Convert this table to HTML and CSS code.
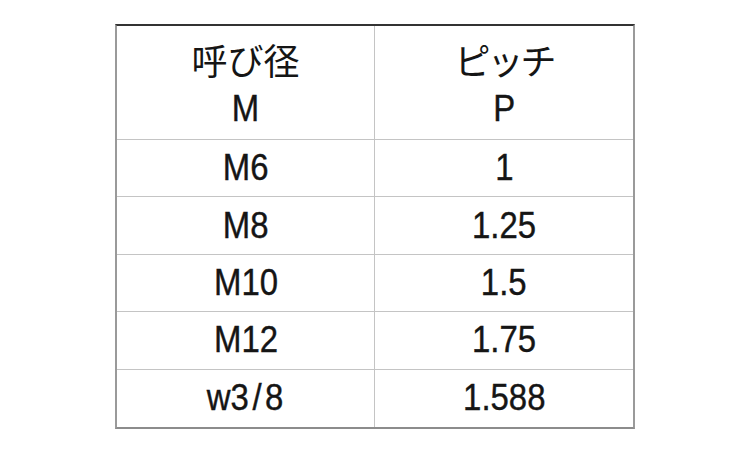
FILE: index.html
```html
<!DOCTYPE html>
<html lang="ja">
<head>
<meta charset="utf-8">
<link rel="stylesheet" href="styles.css">
</head>
<body>
<div class="table">
  <div class="cell head left"><span class="jp">呼び径</span><span class="lat">M</span></div>
  <div class="cell head"><span class="jp kana">ピッチ</span><span class="lat">P</span></div>
  <div class="cell left"><span class="lat">M6</span></div>
  <div class="cell"><span class="lat">1</span></div>
  <div class="cell left"><span class="lat">M8</span></div>
  <div class="cell"><span class="lat">1.25</span></div>
  <div class="cell left"><span class="lat">M10</span></div>
  <div class="cell"><span class="lat">1.5</span></div>
  <div class="cell left"><span class="lat">M12</span></div>
  <div class="cell"><span class="lat">1.75</span></div>
  <div class="cell left last"><span class="lat">w3<span class="slash">/</span>8</span></div>
  <div class="cell last"><span class="lat">1.588</span></div>
</div>
</body>
</html>
```
FILE: styles.css
```css
html, body {
  margin: 0;
  padding: 0;
  background: #ffffff;
}

body {
  font-family: "Liberation Sans", "Noto Sans CJK JP", sans-serif;
  color: #151515;
}

.table {
  margin: 24px 0 0 115px;
  width: 520px;
  box-sizing: border-box;
  display: grid;
  grid-template-columns: 258px 258px;
  grid-template-rows: 114px repeat(5, 57.4px);
  border-top: 2px solid #333333;
  border-left: 2px solid #9a9a9a;
  border-right: 2px solid #9a9a9a;
  border-bottom: 2px solid #8c8c8c;
}

.cell {
  display: flex;
  flex-direction: column;
  align-items: center;
  justify-content: center;
  border-bottom: 1px solid #c4c4c4;
  font-size: 37px;
  line-height: 50px;
}

.cell.left {
  border-right: 1px solid #c4c4c4;
}

.cell.last {
  border-bottom: none;
}

.cell.head {
  justify-content: flex-start;
  padding-top: 8px;
}

.lat {
  display: inline-block;
  transform: scaleX(0.89);
  white-space: nowrap;
  -webkit-text-stroke: 0.4px #151515;
}

.slash {
  margin: 0 4px;
}

.jp {
  font-family: "Noto Sans CJK JP", sans-serif;
  font-size: 36px;
  white-space: nowrap;
}

.kana {
  letter-spacing: -3px;
}
```
